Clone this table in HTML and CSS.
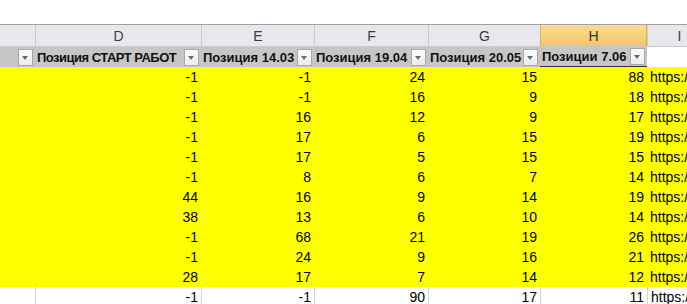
FILE: index.html
```html
<!DOCTYPE html>
<html lang="ru">
<head>
<meta charset="utf-8">
<link rel="stylesheet" href="styles.css">
</head>
<body>
<div class="sheet">
  <div class="topbar"></div>
  <div class="row letters">
    <div class="cell"></div>
    <div class="cell">D</div>
    <div class="cell">E</div>
    <div class="cell">F</div>
    <div class="cell">G</div>
    <div class="cell sel">H</div>
    <div class="cell">I</div>
  </div>
  <div class="row filters">
    <div class="cell"><span class="dd"></span></div>
    <div class="cell"><span class="lbl caps">Позиция СТАРТ РАБОТ</span><span class="dd"></span></div>
    <div class="cell"><span class="lbl">Позиция 14.03</span><span class="dd"></span></div>
    <div class="cell"><span class="lbl">Позиция 19.04</span><span class="dd"></span></div>
    <div class="cell"><span class="lbl">Позиция 20.05</span><span class="dd"></span></div>
    <div class="cell last"><span class="lbl">Позиции 7.06</span><span class="dd"></span></div>
    <div class="cell blank"></div>
  </div>
  <div class="row data yellow"><div class="cell"></div><div class="cell">-1</div><div class="cell">-1</div><div class="cell">24</div><div class="cell">15</div><div class="cell">88</div><div class="cell link">https://</div></div>
  <div class="row data yellow"><div class="cell"></div><div class="cell">-1</div><div class="cell">-1</div><div class="cell">16</div><div class="cell">9</div><div class="cell">18</div><div class="cell link">https://</div></div>
  <div class="row data yellow"><div class="cell"></div><div class="cell">-1</div><div class="cell">16</div><div class="cell">12</div><div class="cell">9</div><div class="cell">17</div><div class="cell link">https://</div></div>
  <div class="row data yellow"><div class="cell"></div><div class="cell">-1</div><div class="cell">17</div><div class="cell">6</div><div class="cell">15</div><div class="cell">19</div><div class="cell link">https://</div></div>
  <div class="row data yellow"><div class="cell"></div><div class="cell">-1</div><div class="cell">17</div><div class="cell">5</div><div class="cell">15</div><div class="cell">15</div><div class="cell link">https://</div></div>
  <div class="row data yellow"><div class="cell"></div><div class="cell">-1</div><div class="cell">8</div><div class="cell">6</div><div class="cell">7</div><div class="cell">14</div><div class="cell link">https://</div></div>
  <div class="row data yellow"><div class="cell"></div><div class="cell">44</div><div class="cell">16</div><div class="cell">9</div><div class="cell">14</div><div class="cell">19</div><div class="cell link">https://</div></div>
  <div class="row data yellow"><div class="cell"></div><div class="cell">38</div><div class="cell">13</div><div class="cell">6</div><div class="cell">10</div><div class="cell">14</div><div class="cell link">https://</div></div>
  <div class="row data yellow"><div class="cell"></div><div class="cell">-1</div><div class="cell">68</div><div class="cell">21</div><div class="cell">19</div><div class="cell">26</div><div class="cell link">https://</div></div>
  <div class="row data yellow"><div class="cell"></div><div class="cell">-1</div><div class="cell">24</div><div class="cell">9</div><div class="cell">16</div><div class="cell">21</div><div class="cell link">https://</div></div>
  <div class="row data yellow"><div class="cell"></div><div class="cell">28</div><div class="cell">17</div><div class="cell">7</div><div class="cell">14</div><div class="cell">12</div><div class="cell link">https://</div></div>
  <div class="row data plain"><div class="cell"></div><div class="cell">-1</div><div class="cell">-1</div><div class="cell">90</div><div class="cell">17</div><div class="cell">11</div><div class="cell link">https://</div></div>
</div>
</body>
</html>
```
FILE: styles.css
```css
html, body {
  margin: 0;
  padding: 0;
  background: #ffffff;
  overflow: hidden;
}
.sheet {
  width: 711px;
  font-family: "Liberation Sans", Arial, sans-serif;
  font-size: 13px;
  color: #000;
}
.topbar {
  height: 24px;
  border-bottom: 1px solid #9ea0a3;
  background: #ffffff;
}
.row {
  display: grid;
  grid-template-columns: 35px 166px 113px 114px 112px 107px 64px;
}
.letters {
  height: 21px;
  background: #e6e8eb;
  border-bottom: 1px solid #c7cacf;
}
.letters .cell {
  border-left: 1px solid #c7cacf;
  display: flex;
  align-items: center;
  justify-content: center;
  color: #3c3c3c;
  font-size: 14px;
}
.letters .cell:first-child { border-left: none; }
.letters .sel {
  background: linear-gradient(#fbdc92, #f4c566);
  border-left-color: #e2b358;
  border-right: 1px solid #e2b358;
  color: #333;
}
.filters {
  height: 20px;
  background: #c6c6c6;
}
.filters .cell {
  display: flex;
  align-items: center;
  padding: 0 2px 0 2px;
  min-width: 0;
  overflow: hidden;
}
.filters .cell:first-child { padding-left: 0; }
.filters .last { border-bottom: 1px solid #2f2f2f; }
.filters .blank { background: #ffffff; }
.lbl {
  font-weight: bold;
  white-space: nowrap;
  color: #111;
}
.caps { letter-spacing: -0.5px; }
.dd {
  margin-left: auto;
  width: 13px;
  height: 15px;
  border: 1px solid #a8a8a8;
  background: linear-gradient(#fbfbfb, #ececec);
  position: relative;
  flex: none;
}
.dd::after {
  content: "";
  position: absolute;
  left: 3px;
  top: 6px;
  border-left: 3.5px solid transparent;
  border-right: 3.5px solid transparent;
  border-top: 4px solid #6a6a6a;
}
.data {
  height: 20px;
}
.data .cell {
  display: flex;
  align-items: center;
  justify-content: flex-end;
  padding-right: 3px;
  font-size: 14px;
  white-space: nowrap;
}
.data .link {
  justify-content: flex-start;
  padding-left: 3px;
}
.yellow { background: #ffff00; }
.plain .cell { border-left: 1px solid #d4d4d4; }
.plain .cell:first-child { border-left: none; }
```
